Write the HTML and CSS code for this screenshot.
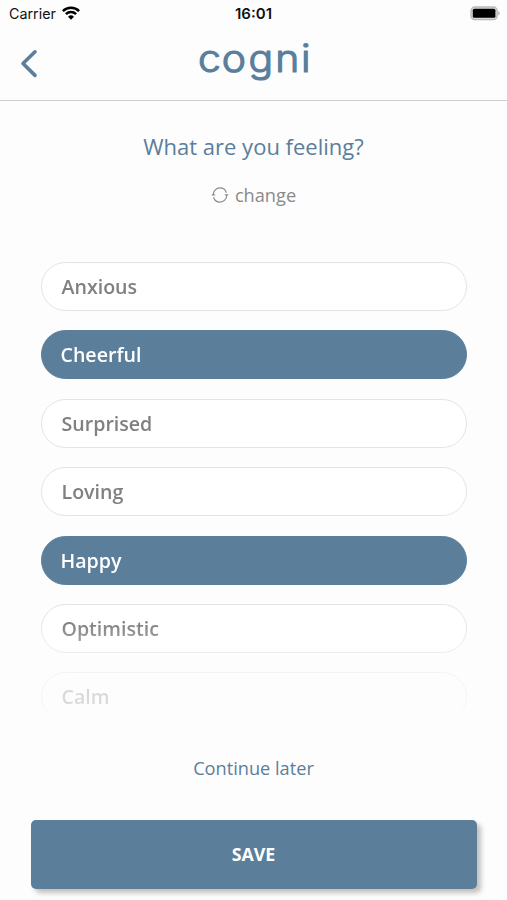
FILE: index.html
```
<!DOCTYPE html>
<html lang="en">
<head>
  <meta charset="UTF-8">
  <meta name="viewport" content="width=device-width, initial-scale=1">
  <title>cogni</title>
  <link rel="stylesheet" href="styles.css">
</head>
<body>
  <div class="status-bar">
    <div class="carrier">
      <span>Carrier</span>
      <svg width="18" height="14" viewBox="0 0 18 14" fill="none" stroke="#000" stroke-width="2.5">
        <path d="M0.9 5.1a11.4 11.4 0 0 1 16.2 0"/>
        <path d="M3.9 8.2a7.2 7.2 0 0 1 10.2 0"/>
        <path d="M9 13.7L6 10.7a4.3 4.3 0 0 1 6 0z" fill="#000" stroke="none"/>
      </svg>
    </div>
    <div class="time">16:01</div>
    <svg class="battery" width="31" height="15" viewBox="0 0 31 15">
      <rect x="1" y="1" width="26.2" height="12.6" rx="3.8" fill="#d8d8d8" stroke="#b8b8b8" stroke-width="1.3"/>
      <rect x="2.8" y="2.8" width="22.6" height="9" rx="1.5" fill="#000"/>
      <path d="M28.3 5v4.6a2.5 2.5 0 0 0 0-4.6z" fill="#b4b4b4"/>
    </svg>
  </div>

  <header class="header">
    <button class="back" aria-label="Back">
      <svg width="18" height="30" viewBox="0 0 18 30" fill="none" stroke="#5b7e9b" stroke-width="3.6" stroke-linecap="round" stroke-linejoin="round">
        <path d="M15 2.8L3 14.5L15 26.4"/>
      </svg>
    </button>
    <svg class="logo" width="120" height="64" viewBox="0 0 120 64">
      <text transform="scale(1.09 1)" x="3.7 25.4 50 74.6 98.1" y="39.6">cogni</text>
    </svg>
  </header>

  <main class="content">
    <h1 class="question">What are you feeling?</h1>
    <button class="change">
      <svg width="18" height="16" viewBox="0 0 18 16" fill="none" stroke="#8a8a8a" stroke-width="1.1">
        <path d="M2.3 7.6A6.7 6.7 0 0 1 15.7 7.6M15.7 8.4A6.7 6.7 0 0 1 2.3 8.4" stroke-dasharray="19 3"/>
        <path d="M0.2 8.6L2.4 6.2L4.6 8.6zM13.4 7.2L15.6 9.6L17.8 7.2z" fill="#8a8a8a" stroke="none"/>
      </svg>
      <span>change</span>
    </button>

    <div class="feelings">
      <button class="feeling">Anxious</button>
      <button class="feeling selected">Cheerful</button>
      <button class="feeling">Surprised</button>
      <button class="feeling">Loving</button>
      <button class="feeling selected">Happy</button>
      <button class="feeling">Optimistic</button>
      <button class="feeling">Calm</button>
    </div>

    <a class="later" href="#">Continue later</a>
    <button class="save">SAVE</button>
  </main>

  <script>
    document.querySelectorAll(".feeling").forEach(function (item) {
      item.addEventListener("click", function () {
        item.classList.toggle("selected");
      });
    });
  </script>
</body>
</html>
```
FILE: styles.css
```
* {
  box-sizing: border-box;
}
body {
  margin: 0;
  height: 900px;
  overflow: hidden;
  background: #fdfdfd;
  font-family: "Open Sans", "Noto Sans", sans-serif;
  color: #808080;
}
button {
  padding: 0;
  border: none;
  background: none;
  font-family: inherit;
  color: inherit;
  cursor: pointer;
}
svg {
  display: block;
}
.status-bar {
  display: grid;
  grid-template-columns: 1fr auto 1fr;
  align-items: center;
  height: 27px;
  padding: 0 6px 0 9px;
  font-family: Inter, sans-serif;
  font-size: 14.3px;
  color: #111;
}
.carrier {
  display: flex;
  align-items: center;
  gap: 6px;
}
.carrier svg {
  margin-top: -2px;
}
.time {
  padding-right: 3px;
  font-size: 15px;
  font-weight: 600;
}
.battery {
  justify-self: end;
}
.header {
  display: grid;
  grid-template-columns: 60px 1fr 60px;
  align-items: center;
  height: 74px;
  border-bottom: 1px solid #ccd0d2;
}
.back {
  width: 18px;
  margin-left: 20px;
}
.logo {
  justify-self: center;
}
.logo text {
  font-family: Inter, sans-serif;
  font-size: 37.5px;
  font-weight: 300;
  fill: #5b7e9b;
  stroke: #5b7e9b;
  stroke-width: 1.2;
  stroke-linejoin: round;
}
.content {
  display: flex;
  flex-direction: column;
  align-items: center;
}
.question {
  margin: 29px 0 0;
  font-size: 22px;
  font-weight: 400;
  line-height: 32px;
  color: #5b7e9b;
}
.change {
  display: flex;
  align-items: center;
  gap: 6px;
  margin-top: 20px;
  font-size: 18.2px;
  line-height: 26px;
  color: #8a8a8a;
}
.feelings {
  display: flex;
  flex-direction: column;
  gap: 19.4px;
  width: 426px;
  height: 460px;
  margin-top: 54px;
  overflow: hidden;
  -webkit-mask-image: linear-gradient(#000 360px, rgba(0, 0, 0, 0.3) 412px, rgba(0, 0, 0, 0.27) 444px, transparent 458px);
  mask-image: linear-gradient(#000 360px, rgba(0, 0, 0, 0.3) 412px, rgba(0, 0, 0, 0.27) 444px, transparent 458px);
}
.feeling {
  flex: none;
  height: 49px;
  padding: 0 20px;
  border: 1.5px solid #e3e3e3;
  border-radius: 25px;
  background: #fff;
  font-size: 19.6px;
  font-weight: 600;
  text-align: left;
}
.feeling.selected {
  padding: 0 19px;
  border-color: #5b7e9b;
  background: #5b7e9b;
  color: #fff;
}
.later {
  margin-top: 33px;
  font-size: 18.2px;
  line-height: 26px;
  color: #5b7e9b;
  text-decoration: none;
}
.save {
  width: 446px;
  height: 69px;
  margin-top: 39px;
  padding-bottom: 2px;
  border-radius: 5px;
  background: #5b7e9b;
  box-shadow: 4px 4px 5px rgba(60, 50, 40, 0.3);
  font-size: 17.8px;
  font-weight: 700;
  color: #fff;
}
```
